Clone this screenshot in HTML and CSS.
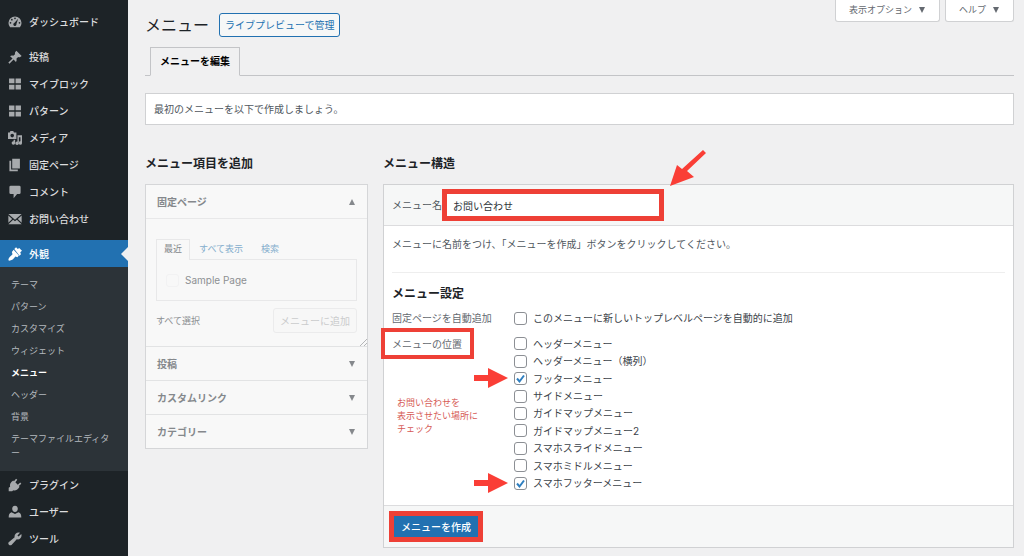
FILE: index.html
```html
<!DOCTYPE html>
<html lang="ja">
<head>
<meta charset="utf-8">
<meta name="viewport" content="width=device-width, initial-scale=1">
<title>メニュー</title>
<link rel="stylesheet" href="styles.css">
</head>
<body>
<div class="admin">
  <nav class="sidebar" aria-label="メインメニュー">
    <ul class="nav">
      <li><a class="nav-link" href="#"><svg class="nav-icon" viewBox="0 0 20 20"><path fill-rule="evenodd" d="M3 17.500A9.300 9.300 0 1 1 17 17.500ZM10 3.500a1.200 1.200 0 1 0 0 2.400 1.200 1.200 0 0 0 0-2.400ZM5.500 5.500a1.200 1.200 0 1 0 0 2.400 1.200 1.200 0 0 0 0-2.400ZM3.600 10a1.200 1.200 0 1 0 0 2.400 1.200 1.200 0 0 0 0-2.400ZM16.400 10a1.200 1.200 0 1 0 0 2.400 1.200 1.200 0 0 0 0-2.400ZM14.500 5.500 9 11.500a2.200 2.200 0 1 0 3 1.500Z"/></svg>ダッシュボード</a></li>
      <li class="nav-gap"><a class="nav-link" href="#"><svg class="nav-icon" viewBox="0 0 20 20"><path d="m10.400 3 1.600-2 7.500 7.500-2 1.500c-1 .6-2 .4-3 0L12 12.500c.7 2 .3 3.500-.7 4.500L8 13.500 2 19.500l-1.500-1.500 6-6L3 8.800c1-1 2.500-1.400 4.500-.7L10.100 6c-.4-1-.3-2 .3-3Z"/></svg>投稿</a></li>
      <li><a class="nav-link" href="#"><svg class="nav-icon" viewBox="0 0 20 20"><path d="M1.500 2h7.700v7H1.500zM10.800 2h7.700v7h-7.700zM1.500 11h7.700v7H1.500zM10.800 11h7.700v7h-7.700z"/></svg>マイブロック</a></li>
      <li><a class="nav-link" href="#"><svg class="nav-icon" viewBox="0 0 20 20"><path d="M1.500 2h7.700v7H1.500zM10.800 2h7.700v7h-7.700zM1.500 11h7.700v7H1.500zM10.800 11h7.700v7h-7.700z"/></svg>パターン</a></li>
      <li><a class="nav-link" href="#"><svg class="nav-icon" viewBox="0 0 20 20"><path fill-rule="evenodd" d="M0 2h2.500l1-2h4l1 2H12v9.500H0ZM6 4a2.600 2.600 0 1 0 0 5.200A2.600 2.600 0 0 0 6 4ZM13.500 6H20v11a2.500 2.500 0 1 1-2.200-2.400V9h-2.300v8.500a2.500 2.500 0 1 1-2-2.500ZM8 12.500h2.200v4.500A2.500 2.500 0 1 1 8 14.600Z"/></svg>メディア</a></li>
      <li><a class="nav-link" href="#"><svg class="nav-icon" viewBox="0 0 20 20"><path d="M6 1h11v14H6zM2 4h2.500v12.500H14V19H2z"/></svg>固定ページ</a></li>
      <li><a class="nav-link" href="#"><svg class="nav-icon" viewBox="0 0 20 20"><path d="M4 1h12a2 2 0 0 1 2 2v8a2 2 0 0 1-2 2h-3l-5 6v-6H4a2 2 0 0 1-2-2V3a2 2 0 0 1 2-2Z"/></svg>コメント</a></li>
      <li><a class="nav-link" href="#"><svg class="nav-icon" viewBox="0 0 20 20"><path d="M.5 3h19L10 11ZM.5 5 6 10 .5 15.500ZM19.500 5v10.500L14 10ZM.5 17.500l6.800-6.500 2.700 2.200 2.700-2.200 6.800 6.500Z"/></svg>お問い合わせ</a></li>
      <li class="nav-gap">
        <a class="nav-link nav-current" href="#"><svg class="nav-icon" viewBox="0 0 20 20"><path d="m9 3 2.500-2.500L14 3l2-1.500 4 4L17.500 7.500l1 3-2 2ZM8 4l7.500 8-2 2.500-3-1c-2 3-5 6-9 6l-1-1c0-3.500 4-5.500 6-8L5.500 7Z"/></svg>外観</a>
        <ul class="subnav">
          <li><a href="#">テーマ</a></li>
          <li><a href="#">パターン</a></li>
          <li><a href="#">カスタマイズ</a></li>
          <li><a href="#">ウィジェット</a></li>
          <li><a class="subnav-current" href="#" aria-current="page">メニュー</a></li>
          <li><a href="#">ヘッダー</a></li>
          <li><a href="#">背景</a></li>
          <li><a href="#">テーマファイルエディター</a></li>
        </ul>
      </li>
      <li><a class="nav-link" href="#"><svg class="nav-icon" viewBox="0 0 20 20"><path d="m11.500 1 1.800 1.500L10.500 6 14 9.500 17.500 6.500 19 8.200 15.500 11.500l1 1c-2 4-6 6-9 5L6 19H1v-5l2-1.500C2 9 4 5.500 7.500 3.500l1 1Z"/></svg>プラグイン</a></li>
      <li><a class="nav-link" href="#"><svg class="nav-icon" viewBox="0 0 20 20"><path d="M10 1c3 0 4 2 4 4.500S12.500 10 10 10 6 8 6 5.500 7 1 10 1ZM5 10.500l5 2.500 5-2.500c3 1 4 3 4 7.500H1c0-4.500 1-6.500 4-7.500Z"/></svg>ユーザー</a></li>
      <li><a class="nav-link" href="#"><svg class="nav-icon" viewBox="0 0 20 20"><path d="M17 1 13.500 5l1.500 1.500L19 3c1.500 4-2 8.500-6.500 7.500L5 18.500c-2.500 2-6-1.500-4-4L9.500 7.500c-1-4 3-8 7.500-6.500Z"/></svg>ツール</a></li>
    </ul>
  </nav>

  <main class="content">
    <div class="screen-meta">
      <button class="meta-button" type="button">表示オプション<svg class="caret" viewBox="0 0 6 6"><path d="M0 0h6L3 6Z"/></svg></button>
      <button class="meta-button" type="button">ヘルプ<svg class="caret" viewBox="0 0 6 6"><path d="M0 0h6L3 6Z"/></svg></button>
    </div>
    <header class="page-header">
      <h1>メニュー</h1>
      <a class="outline-button" href="#">ライブプレビューで管理</a>
    </header>
    <nav class="tabs" aria-label="メニュー管理"><a class="tab" href="#">メニューを編集</a></nav>
    <p class="notice">最初のメニューを以下で作成しましょう。</p>

    <div class="columns">
      <section class="column">
        <h2>メニュー項目を追加</h2>
        <div class="accordion">
          <button class="accordion-head accordion-open" type="button">固定ページ<svg class="caret" viewBox="0 0 6 6"><path d="M0 6h6L3 0Z"/></svg></button>
          <div class="accordion-body">
            <div class="mini-tabs">
              <a class="mini-tab mini-tab-current" href="#">最近</a>
              <a class="mini-tab" href="#">すべて表示</a>
              <a class="mini-tab" href="#">検索</a>
            </div>
            <div class="page-list">
              <label class="page-choice"><input class="check check-faint" type="checkbox" disabled>Sample Page</label>
            </div>
            <div class="add-row">
              <span>すべて選択</span>
              <button class="add-button" type="button" disabled>メニューに追加</button>
            </div>
            <svg class="grip" viewBox="0 0 7 7"><path d="M0 7 7 0M4 7l3-3"/></svg>
          </div>
          <button class="accordion-head" type="button">投稿<svg class="caret" viewBox="0 0 6 6"><path d="M0 0h6L3 6Z"/></svg></button>
          <button class="accordion-head" type="button">カスタムリンク<svg class="caret" viewBox="0 0 6 6"><path d="M0 0h6L3 6Z"/></svg></button>
          <button class="accordion-head" type="button">カテゴリー<svg class="caret" viewBox="0 0 6 6"><path d="M0 0h6L3 6Z"/></svg></button>
        </div>
      </section>

      <section class="column">
        <h2>メニュー構造</h2>
        <form class="editor">
          <div class="editor-head">
            <label for="menu-name">メニュー名</label>
            <span class="name-field">
              <input id="menu-name" class="name-input" type="text" value="お問い合わせ">
              <svg class="arrow-down" viewBox="0 0 38 38"><path d="m34 1 3 3-19 18 7 6L1 37 8 16l5 4Z"/></svg>
            </span>
          </div>
          <div class="editor-body">
            <p class="hint">メニューに名前をつけ、「メニューを作成」ボタンをクリックしてください。</p>
            <h3>メニュー設定</h3>
            <div class="setting">
              <span class="setting-name">固定ページを自動追加</span>
              <label class="choice"><input class="check" type="checkbox">このメニューに新しいトップレベルページを自動的に追加</label>
            </div>
            <div class="setting setting-locations">
              <div class="setting-side">
                <span class="setting-name setting-marked" id="locations">メニューの位置</span>
                <p class="remark">お問い合わせを<br>表示させたい場所に<br>チェック</p>
              </div>
              <div class="choices" role="group" aria-labelledby="locations">
                <label class="choice"><input class="check" type="checkbox">ヘッダーメニュー</label>
                <label class="choice"><input class="check" type="checkbox">ヘッダーメニュー（横列）</label>
                <label class="choice"><svg class="arrow-right" viewBox="0 0 34 20"><path d="M0 7h14V0l20 10-20 10v-7H0Z"/></svg><input class="check" type="checkbox" checked>フッターメニュー</label>
                <label class="choice"><input class="check" type="checkbox">サイドメニュー</label>
                <label class="choice"><input class="check" type="checkbox">ガイドマップメニュー</label>
                <label class="choice"><input class="check" type="checkbox">ガイドマップメニュー2</label>
                <label class="choice"><input class="check" type="checkbox">スマホスライドメニュー</label>
                <label class="choice"><input class="check" type="checkbox">スマホミドルメニュー</label>
                <label class="choice"><svg class="arrow-right" viewBox="0 0 34 20"><path d="M0 7h14V0l20 10-20 10v-7H0Z"/></svg><input class="check" type="checkbox" checked>スマホフッターメニュー</label>
              </div>
            </div>
          </div>
          <div class="editor-foot"><button class="create-button" type="button">メニューを作成</button></div>
        </form>
      </section>
    </div>
  </main>
</div>
</body>
</html>
```
FILE: styles.css
```css
* { box-sizing: border-box; }

body {
  margin: 0;
  background: #f0f0f1;
  color: #50575e;
  font: 10px/14px Inter, "Noto Sans CJK JP", sans-serif;
}

h1, h2, h3, p, ul { margin: 0; padding: 0; }
ul { list-style: none; }
a { color: inherit; text-decoration: none; }
button, input { font: inherit; color: inherit; margin: 0; }

.admin {
  display: grid;
  grid-template-columns: 128px minmax(0, 1fr);
  min-height: 100vh;
}

/* Sidebar */
.sidebar { background: #1d2327; color: #dcdcde; padding-top: 8px; }
.nav-gap { margin-top: 8px; }
.nav-link {
  display: flex;
  align-items: center;
  gap: 7px;
  height: 27px;
  padding-left: 8px;
  font-weight: 500;
}
.nav-icon { width: 14px; height: 14px; fill: #a7aaad; flex: none; }
.nav-current { position: relative; background: #2271b1; color: #fff; }
.nav-current .nav-icon { fill: #fff; }
.nav-current::after {
  content: "";
  position: absolute;
  right: 0;
  top: 7px;
  border: 7px solid transparent;
  border-right-color: #f0f0f1;
  border-left-width: 0;
}
.subnav {
  background: #2c3338;
  color: #b4b9be;
  padding: 7px 12px 7px 11px;
  font-size: 9px;
}
.subnav a { display: block; padding: 4px 0; }
.subnav .subnav-current { color: #fff; font-weight: 700; }

/* Page top */
.content { position: relative; padding: 13px 10px 7px 17px; }
.screen-meta { position: absolute; top: 0; right: 10px; display: flex; gap: 5px; }
.meta-button {
  display: flex;
  align-items: center;
  gap: 7px;
  height: 22px;
  padding: 0 14px 2px 13px;
  border: 1px solid #d0d1d3;
  border-top: 0;
  border-radius: 0 0 3px 3px;
  background: #fff;
  color: #646970;
  font-size: 9px;
}
.caret { width: 6px; height: 6px; fill: currentColor; }
.page-header { display: flex; align-items: center; gap: 10px; }
h1 { font-size: 16px; line-height: 24px; font-weight: 400; color: #1d2327; }
.outline-button {
  height: 24px;
  padding: 4px 5px;
  border: 1px solid #2271b1;
  border-radius: 3px;
  background: #f6f7f7;
  color: #2271b1;
}
.tabs { display: flex; margin-top: 10px; padding-left: 5px; border-bottom: 1px solid #c3c4c7; }
.tab {
  padding: 6px 9px 7px;
  margin-bottom: -1px;
  border: 1px solid #c3c4c7;
  border-bottom-color: #f0f0f1;
  background: #f0f0f1;
  color: #000;
  font-weight: 700;
}
.notice { margin-top: 17px; padding: 8px; border: 1px solid #d0d1d3; background: #fff; }

/* Columns */
.columns {
  display: grid;
  grid-template-columns: 223px minmax(0, 1fr);
  gap: 15px;
  align-items: start;
  margin-top: 30px;
}
h2, h3 { font-size: 12px; line-height: 18px; font-weight: 700; color: #1d2327; }
h2 { margin-bottom: 11px; }

/* Accordion */
.accordion { border: 1px solid #d5d6d8; background: #f8f8f8; color: #8d9093; }
.accordion-head {
  display: flex;
  align-items: center;
  justify-content: space-between;
  width: 100%;
  height: 34px;
  padding: 0 12px 0 11px;
  border: 0;
  border-top: 1px solid #e2e3e4;
  background: transparent;
  font-weight: 700;
  color: #85888c;
}
.accordion-open { border-top: 0; border-bottom: 1px solid #e8e8e9; }
.accordion-body { position: relative; padding: 20px 10px 13px; }
.mini-tabs { display: flex; }
.mini-tab { padding: 2px 8px 3px; color: #85aecd; font-size: 9px; border: 1px solid transparent; border-bottom: 0; }
.mini-tab-current {
  padding: 2px 7px 3px;
  margin-bottom: -1px;
  border-color: #e8e8e9;
  background: #f8f8f8;
  color: #85888c;
}
.page-list { padding: 13px 9px; border: 1px solid #e8e8e9; }
.page-choice { display: flex; align-items: center; gap: 6px; }
.add-row { display: flex; align-items: center; justify-content: space-between; margin-top: 7px; font-size: 9px; }
.add-button {
  height: 25px;
  padding: 0 6px;
  border: 1px solid #ebebec;
  border-radius: 3px;
  background: #f7f7f7;
  color: #cbcccd;
  font-size: 10px;
}
.grip { position: absolute; right: 0; bottom: 0; width: 7px; height: 7px; stroke: #b4b5b7; fill: none; }

/* Menu editor */
.editor { border: 1px solid #d0d1d3; background: #fff; }
.editor-head {
  display: flex;
  align-items: center;
  padding: 4px 8px;
  border-bottom: 1px solid #dcdcde;
  background: #f6f7f7;
  color: #50575e;
}
.name-field { position: relative; width: 222px; border: 5px solid #ee4036; }
.name-input {
  display: block;
  width: 100%;
  height: 22px;
  padding: 0 6px;
  border: 0;
  background: #fff;
  color: #2c3338;
}
.arrow-down { position: absolute; left: 222px; bottom: 29px; width: 38px; height: 38px; fill: #fa3e36; }
.editor-body { padding: 11px 8px 13px; }
.hint { padding-bottom: 21px; border-bottom: 1px solid #eee; }
h3 { margin: 12px 0 8px; }
.setting {
  display: grid;
  grid-template-columns: 122px minmax(0, 1fr);
  color: #646970;
}
.setting-locations { margin-top: 10px; }
.setting-side { padding-top: 2px; }
.setting-marked { position: relative; display: inline-block; }
.setting-marked::after {
  content: "";
  position: absolute;
  inset: -9px -12px -8px -11px;
  border: 4px solid #ee4036;
}
.remark { margin-top: 45px; padding-left: 5px; font-size: 9px; line-height: 13px; color: #d65a56; }
.choices { display: grid; min-height: 157px; }
.choice { position: relative; display: flex; align-items: center; gap: 6px; color: #3c434a; }
.check {
  appearance: none;
  width: 13px;
  height: 13px;
  flex: none;
  border: 1px solid #8c8f94;
  border-radius: 3px;
  background: #fff center / 11px 11px no-repeat;
}
.check:checked {
  background-image: url("data:image/svg+xml,%3Csvg xmlns='http://www.w3.org/2000/svg' viewBox='0 0 11 11'%3E%3Cpath d='M2 5.500 4.500 8.500 9 2.500' fill='none' stroke='%232f7fc0' stroke-width='2'/%3E%3C/svg%3E");
}
.check-faint { border-color: #f2f2f3; background-color: transparent; }
.arrow-right { position: absolute; left: -40px; top: -2px; width: 34px; height: 20px; fill: #fa3e36; }
.editor-foot { padding: 5px; border-top: 1px solid #dcdcde; background: #f6f7f7; }
.create-button {
  display: block;
  height: 31px;
  padding: 0 7px;
  border: 5px solid #ee4036;
  background: #2271b1;
  color: #fff;
  font-weight: 500;
}
```
